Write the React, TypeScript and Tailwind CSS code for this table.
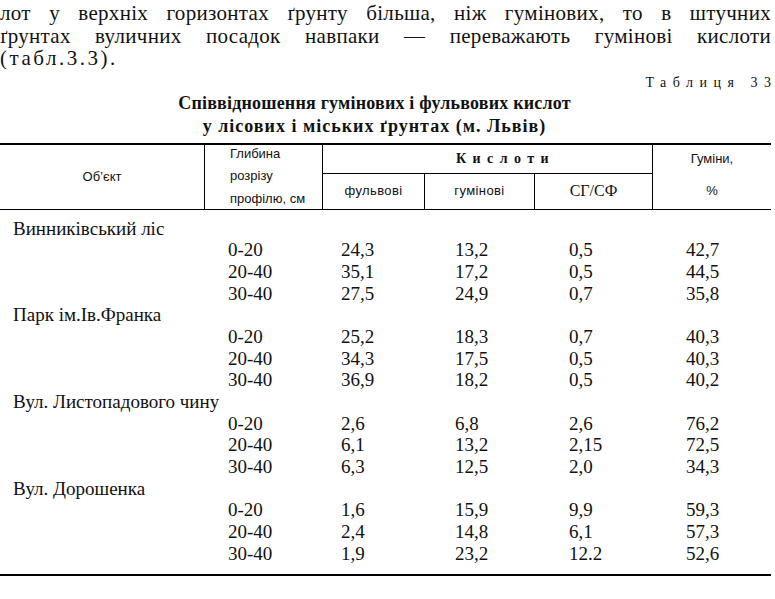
import React from "react";

type Group = { label: string; data: string[][] };

const groups: Group[] = [
  {
    label: "Винниківський ліс",
    data: [
      ["0-20", "24,3", "13,2", "0,5", "42,7"],
      ["20-40", "35,1", "17,2", "0,5", "44,5"],
      ["30-40", "27,5", "24,9", "0,7", "35,8"],
    ],
  },
  {
    label: "Парк ім.Ів.Франка",
    data: [
      ["0-20", "25,2", "18,3", "0,7", "40,3"],
      ["20-40", "34,3", "17,5", "0,5", "40,3"],
      ["30-40", "36,9", "18,2", "0,5", "40,2"],
    ],
  },
  {
    label: "Вул. Листопадового чину",
    data: [
      ["0-20", "2,6", "6,8", "2,6", "76,2"],
      ["20-40", "6,1", "13,2", "2,15", "72,5"],
      ["30-40", "6,3", "12,5", "2,0", "34,3"],
    ],
  },
  {
    label: "Вул. Дорошенка",
    data: [
      ["0-20", "1,6", "15,9", "9,9", "59,3"],
      ["20-40", "2,4", "14,8", "6,1", "57,3"],
      ["30-40", "1,9", "23,2", "12.2", "52,6"],
    ],
  },
];

export default function App() {
  return (
    <div className="w-[775px] h-[599px] overflow-hidden bg-white text-[#111]">
      <div className="w-[771px]">
        {/* paragraph */}
        <div className="pt-[2px] font-['Liberation_Serif',serif] text-[21px] leading-[22.5px] tracking-[0.3px]">
          <div className="text-justify [text-align-last:justify]">
            лот у верхніх горизонтах ґрунту більша, ніж гумінових, то в штучних
          </div>
          <div className="text-justify [text-align-last:justify]">
            ґрунтах вуличних посадок навпаки — переважають гумінові кислоти
          </div>
          <div className="tracking-[2.5px]">(табл.3.3).</div>
        </div>

        {/* table caption */}
        <div className="mt-[4.5px] flex justify-end font-['Liberation_Serif',serif] text-[14px] leading-[18px]">
          <span className="tracking-[6.5px]">Таблиця 3</span>
          <span>3</span>
        </div>
        <div className="pr-[22px] text-center font-['Liberation_Serif',serif] font-bold text-[18px] leading-[23px]">
          <div className="tracking-[0.2px]">Співвідношення гумінових і фульвових кислот</div>
          <div className="tracking-[1px]">у лісових і міських ґрунтах (м. Львів)</div>
        </div>

        {/* table */}
        <div className="mt-[4.5px] border-t-2 border-b-2 border-black">
          <div className="grid grid-cols-[205px_118px_102px_110px_117px_119px] grid-rows-[29px_35px] border-b-[1.5px] border-black font-['Liberation_Sans',sans-serif] text-[13px]">
            <div className="row-span-2 border-r border-black flex items-center justify-center">
              Об’єкт
            </div>
            <div className="row-span-2 border-r border-black flex flex-col justify-center pl-[25px] leading-[22.5px]">
              <span>Глибина</span>
              <span>розрізу</span>
              <span>профілю, см</span>
            </div>
            <div className="col-span-3 border-b-[1.5px] border-black flex items-center justify-center pl-[36px] font-['Liberation_Serif',serif] font-bold text-[14px]">
              <span className="tracking-[6.4px]">Кислоти</span>
            </div>
            <div className="row-span-2 border-l border-black flex flex-col items-center justify-between pt-[4px] pb-[8px]">
              <span>Гуміни,</span>
              <span>%</span>
            </div>
            <div className="border-r border-black flex items-center justify-center tracking-[0.4px]">
              фульвові
            </div>
            <div className="border-r border-black flex items-center justify-center tracking-[0.4px]">
              гумінові
            </div>
            <div className="flex items-center justify-center font-['Liberation_Serif',serif] text-[16px]">
              СГ/СФ
            </div>
          </div>

          <div className="pt-[8px] pb-[10px] font-['Liberation_Serif',serif] text-[19px] leading-[21.67px]">
            {groups.map((g) => (
              <div key={g.label}>
                <div className="pl-[13px]">{g.label}</div>
                {g.data.map((r, i) => (
                  <div
                    key={i}
                    className="grid grid-cols-[228px_113px_114px_114px_117px_1fr]"
                  >
                    <div />
                    {r.map((c, j) => (
                      <div key={j}>{c}</div>
                    ))}
                  </div>
                ))}
              </div>
            ))}
          </div>
        </div>
      </div>
    </div>
  );
}
